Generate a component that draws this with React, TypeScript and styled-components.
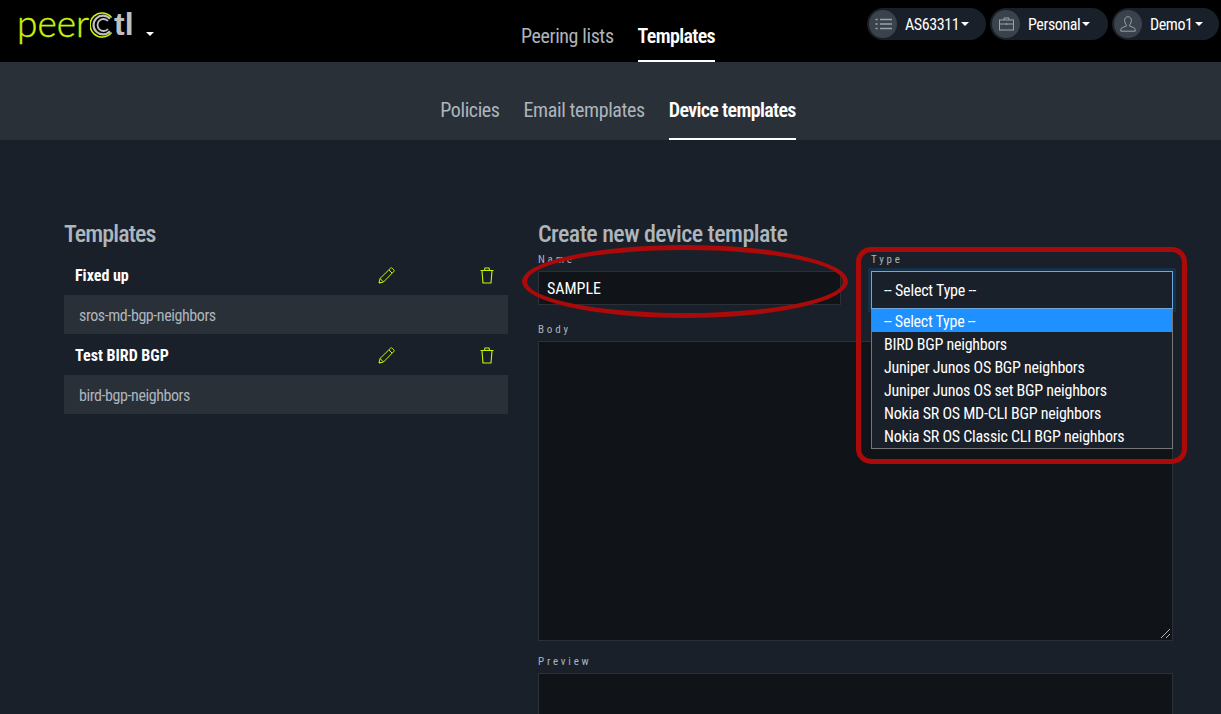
import React from "react";
import styled, { createGlobalStyle } from "styled-components";

const Global = createGlobalStyle`
  html, body { margin: 0; padding: 0; height: 714px; overflow: hidden; background: #1a2029; }
  * { box-sizing: border-box; }
  body { font-family: "Roboto", "Liberation Sans", sans-serif; font-stretch: 75%; }
`;

const Page = styled.div`
  position: relative;
  width: 1221px;
  height: 714px;
  overflow: hidden;
  background: #1a2029;
`;

const Header = styled.header`
  height: 62px;
  background: #000;
  display: grid;
  grid-template-columns: 1fr auto 1fr;
`;

const LogoArea = styled.div`
  display: flex;
  align-items: flex-start;
  padding: 3px 0 0 17px;
`;

const LogoText = styled.span`
  font-family: "Lato", sans-serif;
  font-stretch: 100%;
  font-weight: 300;
  font-size: 37px;
  line-height: 40px;
  color: #c8f50a;
  -webkit-text-stroke: 0.4px #c8f50a;
`;

const LogoTail = styled.span`
  font-family: "Liberation Sans", sans-serif;
  font-stretch: 100%;
  font-weight: 700;
  font-size: 32px;
  line-height: 42px;
  color: #c0c0c0;
  margin-left: -1px;
`;

const Caret = styled.i<{ $left?: number }>`
  display: inline-block;
  width: 0;
  height: 0;
  border-top: 4px solid #fff;
  border-left: 4px solid transparent;
  border-right: 4px solid transparent;
  margin-left: ${(p) => p.$left ?? 0}px;
`;

const LogoCaret = styled(Caret)`
  margin-top: 29px;
`;

const MainTabs = styled.nav`
  display: flex;
  gap: 24px;
  align-items: flex-end;
  height: 62px;
  padding-left: 15px;
`;

const Tab = styled.a<{ $active?: boolean; $pb?: number }>`
  display: block;
  font-size: 20px;
  line-height: 24px;
  letter-spacing: ${(p) => (p.$active ? "-0.65px" : "-0.4px")};
  color: ${(p) => (p.$active ? "#fff" : "#adb5bd")};
  font-weight: ${(p) => (p.$active ? 600 : 400)};
  border-bottom: 2px solid ${(p) => (p.$active ? "#fff" : "transparent")};
  padding-bottom: ${(p) => p.$pb ?? 12}px;
`;

const Pills = styled.div`
  display: flex;
  justify-content: flex-end;
  gap: 4px;
  padding: 8px 2px 0 0;
`;

const Pill = styled.div<{ $w: number }>`
  width: ${(p) => p.$w}px;
  height: 32px;
  border-radius: 16px;
  background: #1a2029;
  display: flex;
  align-items: center;
  padding-left: 2px;
  color: #fff;
  font-size: 16px;
  letter-spacing: -0.4px;
`;

const PillIcon = styled.span`
  width: 28px;
  height: 28px;
  border-radius: 50%;
  background: #3a424c;
  display: flex;
  align-items: center;
  justify-content: center;
  margin-right: 8px;
  flex: none;
`;

const SubNav = styled.nav`
  height: 78px;
  background: #2a3038;
  display: flex;
  justify-content: center;
  gap: 24px;
  padding: 36px 0 0 15px;
`;

const Content = styled.main`
  display: flex;
  gap: 30px;
  padding: 80px 48px 0 64px;
`;

const Left = styled.section`
  width: 444px;
  flex: none;
`;

const Right = styled.section`
  flex: 1;
  min-width: 0;
`;

const Heading = styled.h2`
  margin: 0;
  font-size: 24px;
  font-weight: 500;
  line-height: 28px;
  color: #adb5bd;
  letter-spacing: -0.55px;
`;

const LeftHeading = styled(Heading)`
  margin-bottom: 7px;
  letter-spacing: -0.9px;
`;

const Item = styled.div`
  margin-bottom: 1px;
`;

const ItemHead = styled.div`
  height: 40px;
  padding: 1px 0 0 11px;
  display: grid;
  grid-template-columns: 1fr 102px 28px;
  align-items: center;
  color: #fff;
  font-weight: 700;
  font-size: 16px;
  letter-spacing: 0;
`;

const IconCell = styled.span`
  display: flex;
  height: 20px;
  align-items: center;
`;

const ItemBody = styled.div`
  height: 39px;
  background: #2a3038;
  color: #adb5bd;
  font-size: 16px;
  line-height: 41px;
  padding-left: 15px;
  letter-spacing: -0.42px;
`;

const FieldRow = styled.div`
  display: grid;
  grid-template-columns: 303px 302px;
  justify-content: space-between;
  margin-top: 4px;
`;

const Field = styled.div`
  position: relative;
`;

const Label = styled.label`
  display: block;
  font-size: 11px;
  line-height: 16px;
  letter-spacing: 2.8px;
  color: #adb5bd;
  margin-bottom: 3px;
`;

const Input = styled.div`
  height: 34px;
  background: #101419;
  border: 1px solid #2a3038;
  color: #fff;
  font-size: 16px;
  line-height: 33px;
  padding-left: 8px;
`;

const SelectBox = styled.div`
  height: 38px;
  margin-top: 1px;
  background: #1a2029;
  border: 1px solid #6ea8dc;
  box-shadow: 0 0 0 3px #16304a;
  color: #fff;
  font-size: 16px;
  line-height: 37px;
  padding-left: 12px;
  letter-spacing: -0.2px;
`;

const Dropdown = styled.ul`
  position: absolute;
  z-index: 2;
  left: 0;
  right: 0;
  top: 57px;
  margin: 0;
  padding: 0 0 1px;
  list-style: none;
  background: #1a2029;
  border: 1px solid #767676;
  border-top: 0;
`;

const Option = styled.li<{ $selected?: boolean }>`
  height: 23px;
  line-height: 25px;
  font-size: 16px;
  letter-spacing: -0.25px;
  padding-left: 12px;
  color: #fff;
  background: ${(p) => (p.$selected ? "#1e90ff" : "transparent")};
`;

const Area = styled.div<{ $h: number }>`
  position: relative;
  height: ${(p) => p.$h}px;
  background: #101419;
  border: 1px solid #2a3038;
`;

const Grip = styled.svg`
  position: absolute;
  right: 1px;
  bottom: 1px;
`;

const Stack = styled.div<{ $top: number }>`
  margin-top: ${(p) => p.$top}px;
`;

const Ellipse = styled.div`
  position: absolute;
  z-index: 3;
  left: 522px;
  top: 245px;
  width: 326px;
  height: 73px;
  border: 5px solid #ab0a0a;
  border-radius: 50%;
  pointer-events: none;
`;

const RedBox = styled.div`
  position: absolute;
  z-index: 3;
  left: 856px;
  top: 247px;
  width: 331px;
  height: 217px;
  border: 5px solid #ab0a0a;
  border-radius: 15px;
  pointer-events: none;
`;

const LogoMark = styled.svg`
  margin: 9px 0 0 1px;
  flex: none;
`;

const Pencil = () => (
  <svg width="17" height="17" viewBox="0 0 17 17" fill="none" stroke="#c8f50a" strokeWidth="1">
    <path d="M1 16l1-4.5L12.5 1.2c.6-.5 1.2-.5 1.7 0l1.6 1.6c.5.5.5 1.1 0 1.7L5.5 15z" />
    <path d="M2 11.500L5.500 15M11 3l3 3M1.200 15.800l1.500-.2" />
  </svg>
);

const Trash = () => (
  <svg width="14" height="17" viewBox="0 0 14 17" fill="none" stroke="#c8f50a" strokeWidth="1.1">
    <path d="M2 4l1 12h8l1-12" />
    <path d="M.5 3.500h13M4.500 3.200L5 1h4l.5 2.200" />
  </svg>
);

const Lines = () => (
  <svg width="17" height="14" viewBox="0 0 17 14" fill="none" stroke="#9aa1a9" strokeWidth="1.6">
    <path d="M5 2.500h12M5 7h12M5 11.500h12M.5 2.500h2.200M.5 7h2.200M.5 11.500h2.200" />
  </svg>
);

const Case = () => (
  <svg width="15" height="14" viewBox="0 0 15 14" fill="none" stroke="#9aa1a9" strokeWidth="1">
    <rect x=".5" y="3" width="14" height="10" />
    <path d="M5 3V1h5v2M.5 7h14M7.500 6v2" />
  </svg>
);

const User = () => (
  <svg width="16" height="16" viewBox="0 0 16 16" fill="none" stroke="#9aa1a9" strokeWidth="1">
    <path d="M8 .8c2.200 0 3.400 1.500 3.400 3.600 0 2-1 3.600-1.600 4.200v1.600c1.800.7 5.400 1.400 5.400 3.300v1.700H.8v-1.700c0-1.900 3.600-2.600 5.400-3.300V8.600C5.600 8 4.600 6.400 4.600 4.400 4.600 2.300 5.800.8 8 .8z" />
  </svg>
);

const LogoC = () => (
  <LogoMark width="25" height="26" viewBox="0 0 25 26" fill="none">
    <path d="M21.500 5.500A12 12 0 1 0 21.500 20.500" stroke="#c8f50a" strokeWidth="1.6" />
    <path d="M20 6.800A9.400 9.400 0 1 0 20 19.200" stroke="#c0c0c0" strokeWidth="2.2" />
    <path d="M18 9A6 6 0 1 0 18 17" stroke="#c0c0c0" strokeWidth="1.8" />
  </LogoMark>
);

const items = [
  { name: "Fixed up", type: "sros-md-bgp-neighbors" },
  { name: "Test BIRD BGP", type: "bird-bgp-neighbors" },
];

const options = [
  "-- Select Type --",
  "BIRD BGP neighbors",
  "Juniper Junos OS BGP neighbors",
  "Juniper Junos OS set BGP neighbors",
  "Nokia SR OS MD-CLI BGP neighbors",
  "Nokia SR OS Classic CLI BGP neighbors",
];

export default function App() {
  return (
    <Page>
      <Global />
      <Header>
        <LogoArea>
          <LogoText>peer</LogoText>
          <LogoC />
          <LogoTail>tl</LogoTail>
          <LogoCaret $left={12} />
        </LogoArea>
        <MainTabs>
          <Tab>Peering lists</Tab>
          <Tab $active>Templates</Tab>
        </MainTabs>
        <Pills>
          <Pill $w={119}>
            <PillIcon><Lines /></PillIcon>AS63311<Caret $left={2} />
          </Pill>
          <Pill $w={118}>
            <PillIcon><Case /></PillIcon>Personal<Caret $left={2} />
          </Pill>
          <Pill $w={107}>
            <PillIcon><User /></PillIcon>Demo1<Caret $left={2} />
          </Pill>
        </Pills>
      </Header>
      <SubNav>
        <Tab $pb={9}>Policies</Tab>
        <Tab $pb={9}>Email templates</Tab>
        <Tab $active $pb={9}>Device templates</Tab>
      </SubNav>
      <Content>
        <Left>
          <LeftHeading>Templates</LeftHeading>
          {items.map((it) => (
            <Item key={it.name}>
              <ItemHead>
                <span>{it.name}</span>
                <IconCell><Pencil /></IconCell>
                <IconCell><Trash /></IconCell>
              </ItemHead>
              <ItemBody>{it.type}</ItemBody>
            </Item>
          ))}
        </Left>
        <Right>
          <Heading>Create new device template</Heading>
          <FieldRow>
            <Field>
              <Label>Name</Label>
              <Input>SAMPLE</Input>
            </Field>
            <Field>
              <Label>Type</Label>
              <SelectBox>-- Select Type --</SelectBox>
              <Dropdown>
                {options.map((o, i) => (
                  <Option key={o} $selected={i === 0}>{o}</Option>
                ))}
              </Dropdown>
            </Field>
          </FieldRow>
          <Stack $top={13}>
            <Label>Body</Label>
            <Area $h={300}>
              <Grip width="12" height="12" viewBox="0 0 12 12" stroke="#b5b5b5" strokeWidth="1">
                <path d="M2 11L11 2M7 11l4-4" />
              </Grip>
            </Area>
          </Stack>
          <Stack $top={13}>
            <Label>Preview</Label>
            <Area $h={100} />
          </Stack>
        </Right>
      </Content>
      <Ellipse />
      <RedBox />
    </Page>
  );
}
